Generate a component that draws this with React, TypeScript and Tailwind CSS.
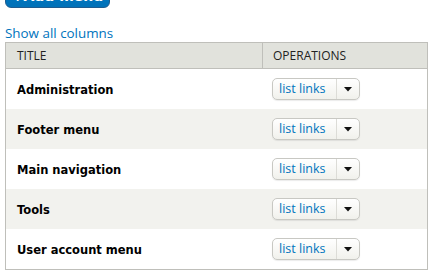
const menus = ['Administration', 'Footer menu', 'Main navigation', 'Tools', 'User account menu'];

const DropButton = () => (
  <div className="flex h-[22px] w-[88px] rounded-[5px] border border-[#c8c8c3] bg-gradient-to-b from-white to-[#f1f1ec] shadow-[0_1px_1px_rgba(0,0,0,0.08)]">
    <a className="flex w-[63px] items-center pl-[6px] text-[12.5px] leading-none text-[#0074bd] [font-family:'Open_Sans',sans-serif]">
      list links
    </a>
    <div className="flex flex-1 items-center justify-center border-l border-[#dcdcd7]">
      <svg width="8" height="5" viewBox="0 0 8 5">
        <path d="M0 0h8L4 4.5z" fill="#111" />
      </svg>
    </div>
  </div>
);

const App = () => {
  return (
    <div className="min-h-screen bg-white pl-[5px] [font-family:'Open_Sans',sans-serif]">
      <button className="-mt-[22px] flex h-[30px] w-[105px] items-center justify-center rounded-[6px] border border-[#1e5c90] bg-gradient-to-b from-[#007bc6] to-[#0071b8] pt-[6px] text-[14px] font-bold text-white [font-family:'DejaVu_Sans',sans-serif]">
        +Add menu
      </button>

      <a className="mt-[17px] block h-[17px] text-[13.4px] leading-[17px] text-[#0074bd]">Show all columns</a>

      <div className="w-[423px] border border-[#bfbfba]">
        <div className="flex h-[26px] items-center border-b border-[#bfbfba] bg-[#e1e2dc] text-[12px] text-[#222]">
          <div className="w-[256px] pl-[11px]">TITLE</div>
          <div className="flex h-full flex-1 items-center border-l border-[#bfbfba] pl-[10px]">OPERATIONS</div>
        </div>
        {menus.map((name, i) => (
          <div key={name} className={`flex h-[40px] items-center ${i % 2 === 1 ? 'bg-[#f2f2ee]' : 'bg-white'}`}>
            <div className="w-[257px] pl-[11px] pt-[3px] text-[11.5px] font-bold text-black [font-family:'DejaVu_Sans',sans-serif]">
              {name}
            </div>
            <div className="pl-[9px]">
              <DropButton />
            </div>
          </div>
        ))}
      </div>
    </div>
  );
};

export default App;
